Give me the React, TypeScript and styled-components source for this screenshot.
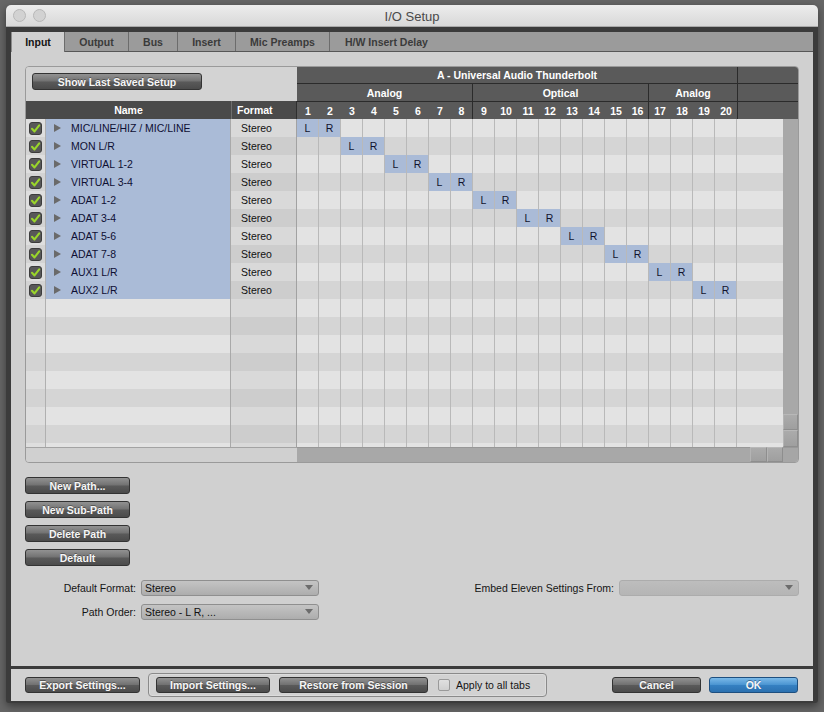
import React from 'react';
import styled, { createGlobalStyle, css } from 'styled-components';

const GlobalStyle = createGlobalStyle`
  html, body { margin: 0; padding: 0; }
  body {
    width: 824px; height: 712px; overflow: hidden; background: #676767;
    font-family: "Liberation Sans", Arial, sans-serif;
  }
  * { box-sizing: border-box; }
`;

const FONT = `"Liberation Sans", Arial, sans-serif`;

const Desktop = styled.div`
  width: 824px; height: 712px; padding: 5px 6px 0 6px; background: #666;
`;

const Window = styled.div`
  width: 812px; height: 698px; background: #3b3b3b;
  border-radius: 5px 5px 3px 3px; overflow: hidden;
  display: flex; flex-direction: column;
  box-shadow: 0 3px 8px rgba(0,0,0,0.45);
`;

const TitleBar = styled.div`
  height: 22px; flex: none;
  display: grid; grid-template-columns: 1fr auto 1fr; align-items: center;
  background: linear-gradient(#ededed, #d8d8d8);
  border-bottom: 1px solid #a9a9a9;
`;

const Lights = styled.div`
  display: flex; gap: 7px; padding-left: 7px;
`;

const Light = styled.span`
  width: 13px; height: 13px; border-radius: 50%;
  background: #d2d2d2; border: 1px solid #b7b7b7;
`;

const Title = styled.div`
  font: 13px ${FONT}; color: #4a4a4a; padding-top: 1px;
`;

const Frame = styled.div`
  flex: 1; display: flex; flex-direction: column; gap: 3px;
  padding: 5px 5px 2px 5px;
`;

const ContentPanel = styled.div`
  height: 634px; background: #d0d0d0; display: flex; flex-direction: column;
`;

const TabBar = styled.div`
  height: 20px; flex: none; display: flex; background: #9b9b9b;
  border-bottom: 1px solid #575757;
`;

const Tab = styled.div<{ $w?: number; $active?: boolean; $last?: boolean }>`
  ${p => (p.$w ? `width: ${p.$w}px;` : 'padding: 0 15px;')}
  height: 19px; display: flex; align-items: center; justify-content: center;
  font: bold 10.5px ${FONT}; color: #3a3a3a;
  border-right: ${p => (p.$last ? 'none' : '1px solid #6c6c6c')};
  ${p => p.$active && css`
    background: #d0d0d0; color: #141414; height: 20px; margin-bottom: -1px;
    border-left: 1px solid #8a8a8a;
  `}
`;

const ContentBody = styled.div`
  flex: 1; display: flex; flex-direction: column; gap: 14px; padding: 14px;
`;

const TablePanel = styled.div`
  width: 774px; border: 1px solid #9a9a9a; border-radius: 4px; overflow: hidden;
  display: flex; flex-direction: column; background: #d2d2d2;
`;

const HeadRow = styled.div`
  display: flex; height: 52px;
`;

const LeftHead = styled.div`
  width: 271px; display: flex; flex-direction: column;
`;

const SetupArea = styled.div`
  height: 34px; padding: 6px 0 0 6px; background: #d3d3d3;
`;

const ColHeadRow = styled.div`
  height: 18px; display: flex; background: #4a4a4a;
  font: bold 10.5px ${FONT}; color: #fff;
`;

const NameHead = styled.div`
  width: 205px; display: flex; align-items: center; justify-content: center;
`;

const FormatHead = styled.div`
  width: 66px; display: flex; align-items: center; padding-left: 5px;
  border-left: 1px solid #6e6e6e; border-right: 1px solid #2e2e2e;
`;

const RightHead = styled.div`
  width: 501px; background: #5a5a5a; display: flex; flex-direction: column;
  font: bold 10.5px ${FONT}; color: #fff;
`;

const HeadBand = styled.div<{ $h: number; $last?: boolean }>`
  height: ${p => p.$h}px; display: flex;
  border-bottom: ${p => (p.$last ? 'none' : '1px solid #2b2b2b')};
`;

const HeadCell = styled.div<{ $w: number; $edge?: boolean }>`
  width: ${p => p.$w}px; flex: none; display: flex; align-items: center; justify-content: center;
  border-right: ${p => (p.$edge ? '1px solid #2b2b2b' : 'none')};
`;

const HeadFiller = styled.div`
  flex: 1;
`;

const BodyRow = styled.div`
  display: flex; height: 328px;
`;

const Rows = styled.div`
  width: 757px; height: 328px; overflow: hidden;
`;

const Row = styled.div`
  height: 18px; display: flex;
  font: 10.5px ${FONT};
`;

const stripe = (alt: boolean) => (alt ? '#d5d5d5' : '#e3e3e3');

const CheckCell = styled.div<{ $alt: boolean }>`
  width: 20px; display: flex; align-items: center; justify-content: center;
  background: ${p => (p.$alt ? '#d3d3d3' : '#dedede')}; border-right: 1px solid #b0b0b0;
`;

const NameCell = styled.div<{ $alt: boolean; $sel: boolean }>`
  width: 185px; display: flex; align-items: center; padding-left: 8px;
  background: ${p => (p.$sel ? '#aabbd7' : stripe(p.$alt))};
  border-right: 1px solid #a9a9a9; color: #0e0f33;
`;

const FormatCell = styled.div<{ $alt: boolean }>`
  width: 66px; display: flex; align-items: center; padding-left: 10px;
  background: ${p => (p.$alt ? '#cdcdcd' : '#d9d9d9')};
  border-right: 1px solid #a2a2a2; color: #111;
`;

const ChanCell = styled.div<{ $alt: boolean; $on: boolean }>`
  width: 22px; display: flex; align-items: center; justify-content: center;
  background: ${p => (p.$on ? '#aabbd7' : stripe(p.$alt))};
  border-right: 1px solid #b9b9b9; color: #11132e;
`;

const ExtraCell = styled.div<{ $alt: boolean }>`
  width: 46px; background: ${p => stripe(p.$alt)};
`;

const VScroll = styled.div`
  width: 15px; display: flex; flex-direction: column;
`;

const Track = styled.div`
  flex: 1; background: #a8a8a8;
`;

const ScrollBtn = styled.div<{ $w?: number; $h?: number }>`
  ${p => (p.$w ? `width: ${p.$w}px;` : '')}
  ${p => (p.$h ? `height: ${p.$h}px;` : '')}
  flex: none;
  background: linear-gradient(#ababab, #9f9f9f);
  border-top: 1px solid #b8b8b8; border-left: 1px solid #b4b4b4;
  border-right: 1px solid #8e8e8e; border-bottom: 1px solid #8e8e8e;
`;

const HScroll = styled.div`
  height: 15px; display: flex;
`;

const HLeft = styled.div`
  width: 271px; background: #d0d0d0; border-top: 1px solid #a3a3a3;
`;

const HTrack = styled.div`
  width: 453px; background: #a8a8a8; border-top: 1px solid #989898;
`;

const Corner = styled.div`
  width: 15px; background: #a6a6a6; border-top: 1px solid #989898;
`;

const DarkButton = styled.button<{ $w: number; $h?: number; $blue?: boolean }>`
  width: ${p => p.$w}px; height: ${p => p.$h ?? 17}px; flex: none;
  margin: 0; padding: 0;
  border: 1px solid #333; border-radius: 3px;
  background: linear-gradient(#929292, #717171 48%, #5a5a5a 52%, #4b4b4b);
  color: #f6f6f6; font: bold 10.5px ${FONT};
  text-shadow: 0 -1px 0 rgba(0,0,0,0.35);
  display: flex; align-items: center; justify-content: center;
  ${p => p.$blue && css`
    border-color: #1e4f7f;
    background: linear-gradient(#7ab9e8, #4b95d2 48%, #3580c2 52%, #2c71b0);
  `}
`;

const ButtonStack = styled.div`
  display: flex; flex-direction: column; gap: 7px;
`;

const FormArea = styled.div`
  display: flex; justify-content: space-between; align-items: flex-start;
`;

const FormGrid = styled.div`
  display: grid; grid-template-columns: 111px 178px; column-gap: 5px; row-gap: 8px;
  align-items: center;
`;

const Label = styled.div`
  font: 10.5px ${FONT}; color: #151515; text-align: right;
`;

const EmbedRow = styled.div`
  display: flex; align-items: center; gap: 5px;
`;

const Select = styled.div<{ $w: number; $disabled?: boolean }>`
  width: ${p => p.$w}px; height: 16px; position: relative;
  border: 1px solid #8f8f8f; border-radius: 3px;
  background: linear-gradient(#c4c4c4, #adadad);
  font: 10.5px ${FONT}; color: #111;
  display: flex; align-items: center; padding-left: 3px;
  ${p => p.$disabled && css`
    border-color: #acacac; background: linear-gradient(#bdbdbd, #b5b5b5);
  `}
`;

const Arrow = styled.svg`
  position: absolute; right: 5px; top: 4px;
`;

const BottomBar = styled.div`
  height: 32px; background: #d2d2d2; display: flex; align-items: center;
  padding: 0 15px 0 14px;
`;

const GroupBox = styled.div`
  width: 399px; height: 24px; margin-left: 8px;
  border: 1px solid #8a8a8a; border-radius: 4px;
  box-shadow: inset 0 0 0 1px #dcdcdc;
  display: flex; align-items: center; padding-left: 7px;
`;

const SmallCheck = styled.span`
  width: 12px; height: 12px; margin-left: 10px; border-radius: 2px;
  border: 1px solid #9a9a9a; background: linear-gradient(#e0e0e0, #cfcfcf);
`;

const CheckLabel = styled.span`
  margin-left: 6px; font: 10.5px ${FONT}; color: #151515;
`;

const Spacer = styled.div`
  flex: 1;
`;

const RightButtons = styled.div`
  display: flex; gap: 8px;
`;

const CheckBox = () => (
  <svg width="13" height="13" viewBox="0 0 13 13">
    <rect x="0.5" y="0.5" width="12" height="12" rx="2.5" fill="#585858" stroke="#3c3c3c" />
    <path d="M3 6.8 L5.5 9.4 L10.2 3.4" fill="none" stroke="#9ad62a" strokeWidth="2.1" strokeLinecap="round" strokeLinejoin="round" />
  </svg>
);

const Disclosure = () => (
  <svg width="7" height="8" viewBox="0 0 7 8" style={{ marginRight: 10, flex: 'none' }}>
    <polygon points="0,0 7,4 0,8" fill="#6a6a6a" />
  </svg>
);

const DownArrow = () => (
  <Arrow width="8" height="5" viewBox="0 0 8 5">
    <polygon points="0,0 8,0 4,5" fill="#6c6c6c" />
  </Arrow>
);

const paths = [
  'MIC/LINE/HIZ / MIC/LINE', 'MON L/R', 'VIRTUAL 1-2', 'VIRTUAL 3-4', 'ADAT 1-2',
  'ADAT 3-4', 'ADAT 5-6', 'ADAT 7-8', 'AUX1 L/R', 'AUX2 L/R',
];
const channels = Array.from({ length: 20 }, (_, i) => i + 1);
const TOTAL_ROWS = 19;

const tabs: { label: string; w?: number }[] = [
  { label: 'Input', w: 54 }, { label: 'Output', w: 64 }, { label: 'Bus', w: 49 },
  { label: 'Insert', w: 58 }, { label: 'Mic Preamps', w: 94 }, { label: 'H/W Insert Delay' },
];

export default function App() {
  return (
    <Desktop>
      <GlobalStyle />
      <Window>
        <TitleBar>
          <Lights><Light /><Light /></Lights>
          <Title>I/O Setup</Title>
          <div />
        </TitleBar>
        <Frame>
          <ContentPanel>
            <TabBar>
              {tabs.map((t, i) => (
                <Tab key={t.label} $w={t.w} $active={i === 0} $last={i === tabs.length - 1}>{t.label}</Tab>
              ))}
            </TabBar>
            <ContentBody>
              <TablePanel>
                <HeadRow>
                  <LeftHead>
                    <SetupArea><DarkButton $w={170}>Show Last Saved Setup</DarkButton></SetupArea>
                    <ColHeadRow>
                      <NameHead>Name</NameHead>
                      <FormatHead>Format</FormatHead>
                    </ColHeadRow>
                  </LeftHead>
                  <RightHead>
                    <HeadBand $h={17}>
                      <HeadCell $w={441} $edge>A - Universal Audio Thunderbolt</HeadCell>
                      <HeadFiller />
                    </HeadBand>
                    <HeadBand $h={18}>
                      <HeadCell $w={176} $edge>Analog</HeadCell>
                      <HeadCell $w={176} $edge>Optical</HeadCell>
                      <HeadCell $w={89} $edge>Analog</HeadCell>
                      <HeadFiller />
                    </HeadBand>
                    <HeadBand $h={17} $last>
                      {channels.map(c => (
                        <HeadCell key={c} $w={c === 20 ? 23 : 22} $edge={c === 8 || c === 16 || c === 20}>{c}</HeadCell>
                      ))}
                      <HeadFiller />
                    </HeadBand>
                  </RightHead>
                </HeadRow>
                <BodyRow>
                  <Rows>
                    {Array.from({ length: TOTAL_ROWS }, (_, r) => {
                      const alt = r % 2 === 1;
                      const name = paths[r];
                      const sel = name !== undefined;
                      return (
                        <Row key={r}>
                          <CheckCell $alt={alt}>{sel && <CheckBox />}</CheckCell>
                          <NameCell $alt={alt} $sel={sel}>
                            {sel && <><Disclosure />{name}</>}
                          </NameCell>
                          <FormatCell $alt={alt}>{sel ? 'Stereo' : ''}</FormatCell>
                          {channels.map(c => {
                            const isL = sel && c === r * 2 + 1;
                            const isR = sel && c === r * 2 + 2;
                            return (
                              <ChanCell key={c} $alt={alt} $on={isL || isR}>
                                {isL ? 'L' : isR ? 'R' : ''}
                              </ChanCell>
                            );
                          })}
                          <ExtraCell $alt={alt} />
                        </Row>
                      );
                    })}
                  </Rows>
                  <VScroll>
                    <Track />
                    <ScrollBtn $h={16} />
                    <ScrollBtn $h={17} />
                  </VScroll>
                </BodyRow>
                <HScroll>
                  <HLeft />
                  <HTrack />
                  <ScrollBtn $w={17} />
                  <ScrollBtn $w={16} />
                  <Corner />
                </HScroll>
              </TablePanel>

              <ButtonStack>
                <DarkButton $w={105}>New Path...</DarkButton>
                <DarkButton $w={105}>New Sub-Path</DarkButton>
                <DarkButton $w={105}>Delete Path</DarkButton>
                <DarkButton $w={105}>Default</DarkButton>
              </ButtonStack>

              <FormArea>
                <FormGrid>
                  <Label>Default Format:</Label>
                  <Select $w={178}>Stereo<DownArrow /></Select>
                  <Label>Path Order:</Label>
                  <Select $w={178}>Stereo - L R, ...<DownArrow /></Select>
                </FormGrid>
                <EmbedRow>
                  <Label>Embed Eleven Settings From:</Label>
                  <Select $w={180} $disabled><DownArrow /></Select>
                </EmbedRow>
              </FormArea>
            </ContentBody>
          </ContentPanel>
          <BottomBar>
            <DarkButton $w={115} $h={16}>Export Settings...</DarkButton>
            <GroupBox>
              <DarkButton $w={114} $h={16}>Import Settings...</DarkButton>
              <DarkButton $w={149} $h={16} style={{ marginLeft: 9 }}>Restore from Session</DarkButton>
              <SmallCheck />
              <CheckLabel>Apply to all tabs</CheckLabel>
            </GroupBox>
            <Spacer />
            <RightButtons>
              <DarkButton $w={89} $h={16}>Cancel</DarkButton>
              <DarkButton $w={89} $h={16} $blue>OK</DarkButton>
            </RightButtons>
          </BottomBar>
        </Frame>
      </Window>
    </Desktop>
  );
}
